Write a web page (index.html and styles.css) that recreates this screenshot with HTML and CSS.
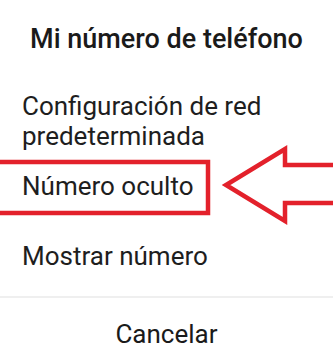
FILE: index.html
```html
<!DOCTYPE html>
<html lang="es">
<head>
<meta charset="utf-8">
<title>Mi número de teléfono</title>
<link rel="stylesheet" href="styles.css">
</head>
<body>
<div class="dialog">
  <h1 class="title">Mi número de teléfono</h1>
  <ul class="options">
    <li class="option">Configuración de red predeterminada</li>
    <li class="option option-hidden">Número oculto</li>
    <li class="option">Mostrar número</li>
  </ul>
  <div class="actions">
    <button class="cancel">Cancelar</button>
  </div>
  <svg class="annotation" width="333" height="360" viewBox="0 0 333 360" aria-hidden="true">
    <rect x="-10" y="162" width="218" height="51" fill="none" stroke="#e3212b" stroke-width="4.5"/>
    <path d="M340 165 L285 165 L285 149 L226 185 L285 221 L285 203 L340 203" fill="none" stroke="#e3212b" stroke-width="4.5" stroke-linejoin="miter"/>
  </svg>
</div>
</body>
</html>
```
FILE: styles.css
```css
html, body {
  margin: 0;
  padding: 0;
  background: #ffffff;
}
body {
  width: 333px;
  height: 360px;
  overflow: hidden;
  font-family: Roboto, "Noto Sans", sans-serif;
  color: #1e1e1e;
}
.dialog {
  position: relative;
  width: 333px;
  height: 360px;
}
.title {
  margin: 0;
  padding-top: 24px;
  font-size: 27px;
  font-weight: 500;
  line-height: 30px;
  text-align: center;
  color: #1a1a1a;
}
.options {
  list-style: none;
  margin: 0;
  padding: 0 0 0 22px;
}
.option {
  font-size: 26px;
  line-height: 30px;
  padding: 0;
}
.option:first-child {
  margin-top: 37px;
}
.option-hidden {
  margin-top: 20px;
}
.option + .option:not(.option-hidden) {
  margin-top: 40px;
}
.actions {
  margin-top: 25px;
  border-top: 2px solid #efefef;
  display: flex;
  justify-content: center;
}
.cancel {
  margin-top: 21px;
  border: none;
  background: none;
  padding: 0;
  font-family: inherit;
  font-size: 26px;
  line-height: 30px;
  color: #1a1a1a;
}
.annotation {
  position: absolute;
  left: 0;
  top: 0;
  pointer-events: none;
}
```
